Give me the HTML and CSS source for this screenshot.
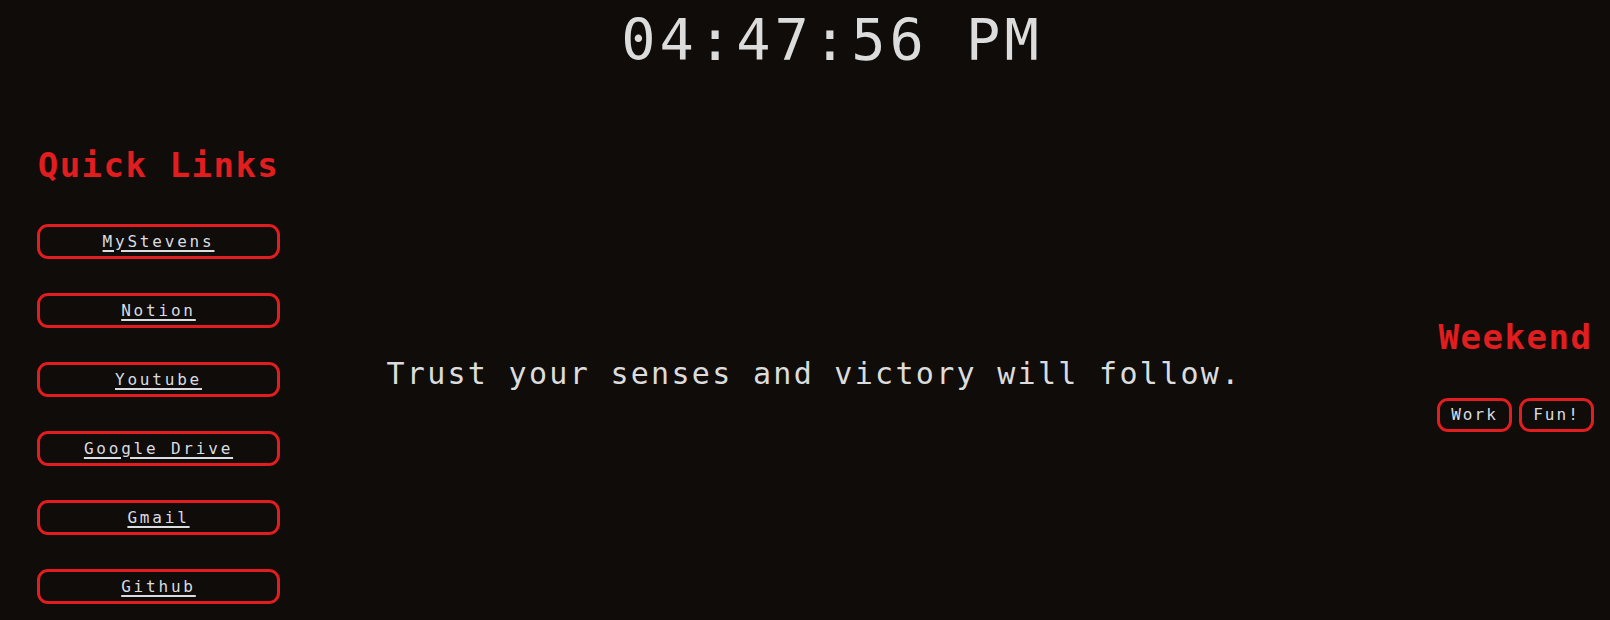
FILE: index.html
```html
<!DOCTYPE html>
<html lang="en">
<head>
<meta charset="utf-8">
<title>Start Page</title>
<link rel="stylesheet" href="styles.css">
</head>
<body>
<header class="clock">04:47:56 PM</header>
<main class="layout">
  <aside class="links">
    <h2 class="heading">Quick Links</h2>
    <nav class="link-list">
      <a class="link-btn" href="#">MyStevens</a>
      <a class="link-btn" href="#">Notion</a>
      <a class="link-btn" href="#">Youtube</a>
      <a class="link-btn" href="#">Google Drive</a>
      <a class="link-btn" href="#">Gmail</a>
      <a class="link-btn" href="#">Github</a>
    </nav>
  </aside>
  <section class="center">
    <p class="quote">Trust your senses and victory will follow.</p>
  </section>
  <aside class="mode">
    <div class="mode-box">
      <h2 class="heading">Weekend</h2>
      <div class="mode-buttons">
        <button class="mode-btn">Work</button>
        <button class="mode-btn">Fun!</button>
      </div>
    </div>
  </aside>
</main>
</body>
</html>
```
FILE: styles.css
```css
html, body {
  margin: 0;
  padding: 0;
  background: #0f0c09;
  height: 620px;
  overflow: hidden;
}
body {
  font-family: "DejaVu Sans Mono", "Liberation Mono", monospace;
  color: #dcdcdc;
}
.clock {
  box-sizing: border-box;
  height: 128px;
  padding: 12px 0 0 54px;
  text-align: center;
  font-size: 57px;
  line-height: 57px;
  letter-spacing: 4px;
  color: #dcdcdc;
}
.layout {
  display: flex;
  align-items: center;
  height: 492px;
}
.links {
  width: 317px;
  box-sizing: border-box;
  padding-left: 37px;
  display: flex;
  flex-direction: column;
}
.heading {
  margin: 0;
  font-size: 34px;
  line-height: 40px;
  letter-spacing: 1.5px;
  color: #e21d1f;
  font-weight: bold;
  text-align: center;
}
.links .heading {
  width: 243px;
}
.link-list {
  display: flex;
  flex-direction: column;
  gap: 34px;
  margin-top: 39px;
}
.link-btn {
  box-sizing: border-box;
  width: 243px;
  height: 35px;
  border: 3px solid #e21d1f;
  border-radius: 11px;
  display: flex;
  align-items: center;
  justify-content: center;
  color: #d9dde2;
  font-size: 16px;
  letter-spacing: 2.8px;
  text-decoration: underline;
  text-decoration-thickness: 2px;
  text-underline-offset: 3px;
}
.center {
  flex: 1;
  display: flex;
  justify-content: center;
}
.quote {
  margin: 0;
  font-size: 30px;
  line-height: 36px;
  letter-spacing: 2.3px;
  color: #dcdcdc;
}
.mode {
  width: 299px;
  box-sizing: border-box;
  padding-right: 16px;
  display: flex;
  justify-content: flex-end;
}
.mode-box {
  width: 157px;
  display: flex;
  flex-direction: column;
  align-items: center;
}
.mode-buttons {
  display: flex;
  gap: 7px;
  margin-top: 41px;
}
.mode-btn {
  box-sizing: border-box;
  width: 75px;
  height: 34px;
  padding: 0;
  background: transparent;
  border: 3px solid #e21d1f;
  border-radius: 11px;
  color: #d9dde2;
  font-family: "DejaVu Sans Mono", "Liberation Mono", monospace;
  font-size: 16px;
  letter-spacing: 2px;
}
```
